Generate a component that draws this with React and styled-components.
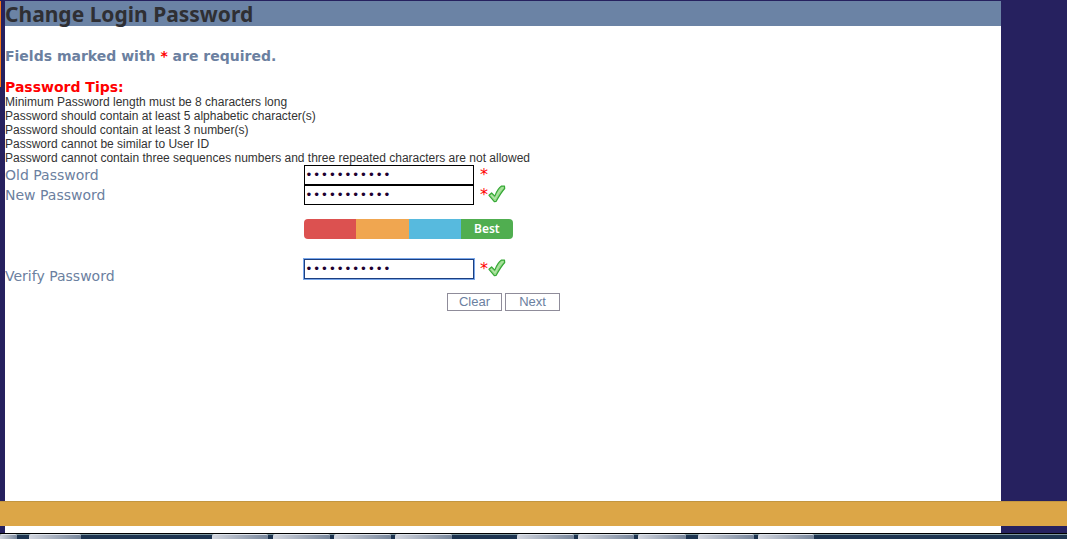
import React, {useState} from 'react';
import styled, {createGlobalStyle} from 'styled-components';

const GlobalStyle = createGlobalStyle`
  * { box-sizing: border-box; }
  html, body, #root { height: 100%; }
  body { margin: 0; overflow: hidden; background: #26215f; font-family: "DejaVu Sans", Verdana, sans-serif; font-size: 14px; color: #6b80a0; }
`;

const Page = styled.div`display: flex; flex-direction: column; min-height: 100%; padding-top: 1px;`;
const Body = styled.div`display: flex; flex: 1;`;
const Edge = styled.div`width: 5px; border-left: 1px solid #f47a1c; height: 86px;`;
const Content = styled.main`flex: 1; margin-right: 66px; background: #fff;`;
const Title = styled.h1`margin: 0; height: 25px; line-height: 26px; background: #6b83a5; color: #2f2f33; font-family: "Noto Sans", Tahoma, sans-serif; font-size: 21px; font-weight: 700;`;
const Notice = styled.p`margin: 20px 0 12px; line-height: 20px; font-weight: 700;`;
const Required = styled.span`color: #f00;`;
const TipsTitle = styled.h2`margin: 0; padding-top: 1px; font-size: 14px; line-height: 16px; font-weight: 700; color: #f00;`;
const Tips = styled.ul`margin: 0; padding: 0; list-style: none; font-family: "Liberation Sans", Arial, sans-serif; font-size: 12px; line-height: 14px; color: #333;`;
const Row = styled.div`display: grid; grid-template-columns: 299px 1fr; align-items: ${p => p.$low ? 'end' : 'start'};`;
const Label = styled.label`line-height: 20px;`;
const Cell = styled.div`display: flex; align-items: flex-start; height: ${p => p.$tall ? '27px' : '20px'};`;
const Mark = styled(Required)`font-size: 16px; line-height: 20px;`;
const Field = styled.input`
  width: 170px; height: 20px; margin-right: 6px; padding: 0; border: 1px solid ${p => p.$active ? '#1c3f80' : '#000'}; border-radius: 0;
  outline: ${p => p.$active ? '1px solid #79a7ea' : 'none'};
  background: #fff; color: #200030; font-family: "Liberation Mono", monospace; font-size: 13px;
`;
const Meter = styled.div`display: flex; width: 209px; height: 20px; margin: 14px 0 20px 299px; border-radius: 4px; overflow: hidden;`;
const Segment = styled.div`flex: 1; background: ${p => p.$color}; color: #fff; font-family: "Noto Sans", sans-serif; font-size: 12px; font-weight: 600; line-height: 19px; text-align: center;`;
const Actions = styled.div`display: flex; gap: 3px; margin: 7px 0 0 442px;`;
const Button = styled.button`width: 55px; height: 18px; padding: 0; border: 1px solid #8f8c9a; border-radius: 0; background: #fff; color: #6b80a0; font-family: "Liberation Sans", Arial, sans-serif; font-size: 13px; line-height: 16px;`;
const Footer = styled.footer`height: 25px; background: #dca647; border-top: 1px solid #c39640;`;
const Gap = styled.div`height: 7px; margin: 0 66px 0 5px; background: #fff;`;
const Taskbar = styled.div`display: flex; height: 6px; border-top: 1px solid #000; background: linear-gradient(#7d979f 0 1px, #1d3450 1px);`;
const Task = styled.div`width: ${p => p.$width}px; margin-left: ${p => p.$gap}px; border-top: 1px solid #dfe4ea; border-radius: 2px 2px 0 0; background: linear-gradient(90deg, #d3d6df, #77869b);`;

const TIPS = [
  'Minimum Password length must be 8 characters long',
  'Password should contain at least 5 alphabetic character(s)',
  'Password should contain at least 3 number(s)',
  'Password cannot be similar to User ID',
  'Password cannot contain three sequences numbers and three repeated characters are not allowed'
];

const STRENGTH = [
  {color: '#dc5150'}, {color: '#f0a650'}, {color: '#57bade'}, {color: '#50ae50', text: 'Best'}
];

// [gap before, width]
const TASKS = [[0, 17], [12, 52], [131, 56], [5, 57], [4, 57], [4, 57], [65, 57], [4, 56], [4, 48], [12, 56], [4, 56]];

function Check() {
  return (
    <svg width="18" height="18" viewBox="0 0 18 18" aria-hidden="true">
      <path d="M1 10.3 3.6 8l3.200 3.100C8.400 6.800 10.500 3 13.500 1l3 .2.200 2.300C13 7.500 10.500 12 8.200 16.300L6.300 16.600Z" fill="#9bdb8e" stroke="#35a835" strokeWidth="1.200" strokeLinejoin="round" />
      <path d="M3.300 10.200 7 14C9 9.500 11.500 5.500 15 2.500" fill="none" stroke="#b5e8aa" strokeWidth="1" />
    </svg>
  );
}

function PasswordRow({id, label, checked, active, low}) {
  const [value, setValue] = useState('password123');
  return (
    <Row $low={low}>
      <Label htmlFor={id}>{label}</Label>
      <Cell $tall={low}>
        <Field id={id} type="password" value={value} $active={active} onChange={e => setValue(e.target.value)} />
        <Mark>*</Mark>
        {checked && <Check />}
      </Cell>
    </Row>
  );
}

function App() {
  return (
    <Page>
      <GlobalStyle />
      <Body>
        <Edge />
        <Content>
          <Title>Change Login Password</Title>
          <Notice>Fields marked with <Required>*</Required> are required.</Notice>
          <TipsTitle>Password Tips:</TipsTitle>
          <Tips>{TIPS.map(tip => <li key={tip}>{tip}</li>)}</Tips>
          <PasswordRow id="old" label="Old Password" />
          <PasswordRow id="new" label="New Password" checked />
          <Meter>
            {STRENGTH.map(s => <Segment key={s.color} $color={s.color}>{s.text}</Segment>)}
          </Meter>
          <PasswordRow id="verify" label="Verify Password" checked active low />
          <Actions>
            <Button type="button">Clear</Button>
            <Button type="button">Next</Button>
          </Actions>
        </Content>
      </Body>
      <Footer />
      <Gap />
      <Taskbar>
        {TASKS.map(([gap, width], i) => <Task key={i} $gap={gap} $width={width} />)}
      </Taskbar>
    </Page>
  );
}

export default App;
